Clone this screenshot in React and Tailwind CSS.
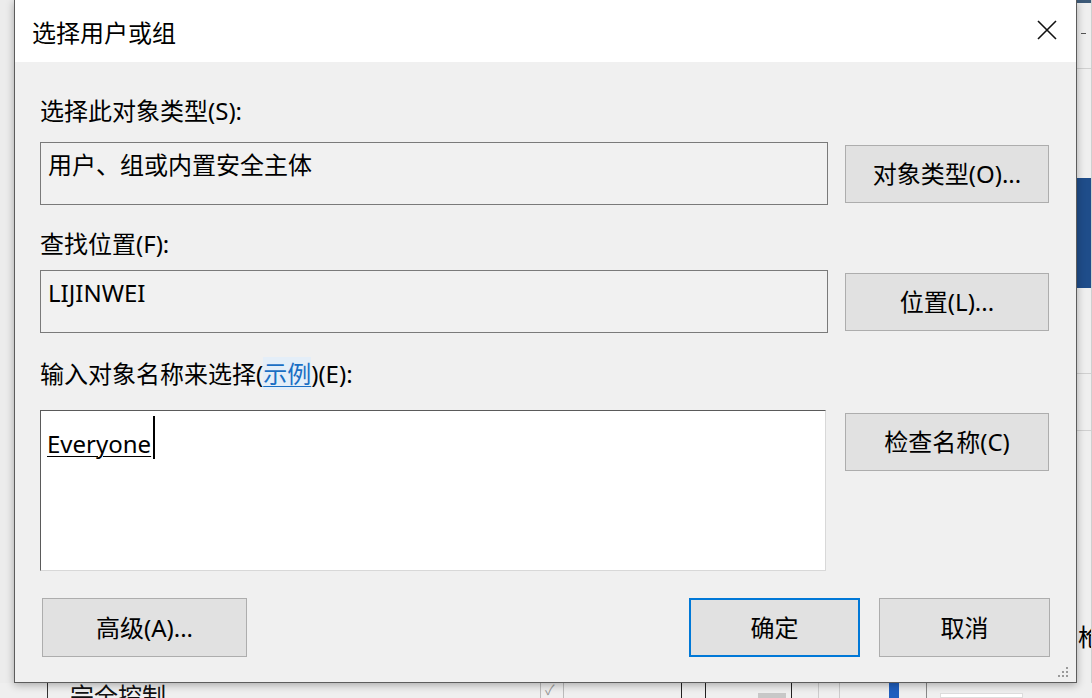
const font = { fontFamily: '"Noto Sans", "Noto Sans CJK SC", sans-serif' }

const Btn = ({ label, className = '' }) => {
  return (
    <div
      className={`flex items-center justify-center h-[58px] bg-[#e1e1e1] border border-[#adadad] text-[24px] leading-[24px] text-black ${className}`}
    >
      {label}
    </div>
  )
}

const CloseIcon = () => (
  <svg width="20" height="20" viewBox="0 0 20 20">
    <path d="M1 1 L19 19 M19 1 L1 19" stroke="#111" strokeWidth="1.6" fill="none" />
  </svg>
)

const Grip = () => {
  const dots = [
    [8, 0],
    [4, 4],
    [8, 4],
    [0, 8],
    [4, 8],
    [8, 8],
  ]
  return (
    <svg width="12" height="12" viewBox="0 0 12 12" className="absolute right-[7px] bottom-[4px]">
      {dots.map(([x, y]) => (
        <rect key={`${x}-${y}`} x={x + 1} y={y + 1} width="2" height="2" fill="#9a9a9a" />
      ))}
    </svg>
  )
}

// strip of the window that sits behind the dialog, right side
const RightStrip = () => {
  return (
    <div className="flex flex-col w-[15px] h-full bg-[#efefef] border-r border-[#cfcfcf]">
      <div className="h-[3px] bg-[#3d5a78]" />
      <div className="h-[30px]" />
      <div className="h-[1px] w-[5px] ml-[4px] bg-[#555]" />
      <div className="h-[34px]" />
      <div className="h-[1px] bg-[#d0d0d0]" />
      <div className="h-[109px]" />
      <div className="h-[110px] bg-[#1f4d8a]" />
      <div className="h-[85px]" />
      <div className="h-[1px] bg-[#d0d0d0]" />
      <div className="h-[56px]" />
      <div className="h-[1px] bg-[#d0d0d0]" />
      <div className="h-[194px]" />
      <div className="pl-[1px] text-[24px] leading-[24px] text-black overflow-hidden whitespace-nowrap">枪</div>
    </div>
  )
}

// strip of the window that sits behind the dialog, bottom side
const BottomStrip = () => {
  const line = 'w-[1px] h-full'
  return (
    <div className="flex h-[15px] overflow-hidden bg-[#efefef]">
      <div className="w-[47px] shrink-0" />
      <div className={`${line} bg-[#333]`} />
      <div className="w-[492px] shrink-0 pl-[22px] pt-[1px] text-[24px] leading-[24px] text-[#111] whitespace-nowrap">
        完全控制
      </div>
      <div className={`${line} bg-[#bbb]`} />
      <div className="w-[22px] shrink-0 pl-[4px] text-[14px] leading-[14px] text-[#999]">✓</div>
      <div className={`${line} bg-[#bbb]`} />
      <div className="w-[117px] shrink-0" />
      <div className={`${line} bg-[#222]`} />
      <div className="w-[23px] shrink-0" />
      <div className={`${line} bg-[#222]`} />
      <div className="w-[52px] shrink-0" />
      <div className="w-[28px] h-[5px] self-end bg-[#c8c8c8]" />
      <div className="w-[5px] shrink-0" />
      <div className={`${line} bg-[#222]`} />
      <div className="w-[26px] shrink-0" />
      <div className={`${line} bg-[#ccc]`} />
      <div className="w-[20px] shrink-0" />
      <div className={`${line} bg-[#ccc]`} />
      <div className="w-[49px] shrink-0" />
      <div className="w-[10px] bg-[#1f5fbf]" />
      <div className="w-[27px] shrink-0" />
      <div className={`${line} bg-[#888]`} />
      <div className="w-[13px] shrink-0" />
      <div className="w-[83px] h-[5px] self-end bg-white border border-[#ddd]" />
    </div>
  )
}

const Dialog = () => {
  return (
    <div className="relative z-10 w-[1063px] h-[683px] flex flex-col border-x border-b border-[#5c5c5c] bg-[#f0f0f0] shadow-[0_2px_8px_rgba(0,0,0,0.3)]">
      {/* title bar */}
      <div className="flex justify-between h-[62px] bg-white pl-[17px] pr-[19px]">
        <div className="pt-[21px] text-[24px] leading-[24px] text-black">选择用户或组</div>
        <div className="pt-[20px]">
          <CloseIcon />
        </div>
      </div>

      {/* body */}
      <div className="relative flex-1 flex flex-col pl-[25px] pr-[26px] text-black">
        <div className="mt-[37px] text-[24px] leading-[24px]">选择此对象类型(S):</div>
        <div className="flex items-start gap-[17px] mt-[19px]">
          <div className="w-[788px] h-[63px] border border-[#7a7a7a] bg-[#f1f1f1] pt-[10px] pl-[7px] text-[24px] leading-[24px]">
            用户、组或内置安全主体
          </div>
          <Btn label="对象类型(O)..." className="w-[204px] mt-[3px]" />
        </div>

        <div className="mt-[27px] text-[24px] leading-[24px]">查找位置(F):</div>
        <div className="flex items-start gap-[17px] mt-[14px]">
          <div className="w-[788px] h-[63px] border border-[#7a7a7a] bg-[#f1f1f1] pt-[10px] pl-[7px] text-[24px] leading-[24px]">
            LIJINWEI
          </div>
          <Btn label="位置(L)..." className="w-[204px] mt-[3px]" />
        </div>

        <div className="mt-[29px] text-[24px] leading-[24px]">
          输入对象名称来选择(
          <span className="text-[#1a6fc4] bg-[#e4eef8] underline decoration-1 underline-offset-[3px]">示例</span>
          )(E):
        </div>
        <div className="flex items-start gap-[19px] mt-[24px]">
          <div className="w-[786px] h-[161px] bg-white border border-t-[#5a5a5a] border-l-[#5a5a5a] border-r-[#d8d8d8] border-b-[#d8d8d8]">
            <div className="flex items-start pt-[5px] pl-[6px]">
              <span className="mt-[16px] text-[24px] leading-[24px] underline decoration-1 underline-offset-[3px]">
                Everyone
              </span>
              <span className="w-[2px] h-[43px] bg-black ml-[2px]" />
            </div>
          </div>
          <Btn label="检查名称(C)" className="w-[204px] mt-[3px]" />
        </div>

        <div className="flex items-start mt-[27px]">
          <Btn label="高级(A)..." className="w-[205px] h-[59px] ml-[2px]" />
          <div className="flex-1" />
          <div className="flex items-center justify-center w-[171px] h-[59px] bg-[#e1e1e1] border-2 border-[#0078d7] text-[24px] leading-[24px]">
            确定
          </div>
          <Btn label="取消" className="w-[171px] h-[59px] ml-[19px]" />
        </div>

        <Grip />
      </div>
    </div>
  )
}

const App = () => {
  return (
    <div className="flex flex-col w-[1092px] h-[698px] overflow-hidden bg-[#efefef]" style={font}>
      <div className="flex h-[683px]">
        <div className="w-[14px] shrink-0 bg-[#ececec]" />
        <Dialog />
        <RightStrip />
      </div>
      <BottomStrip />
    </div>
  )
}

export default App
